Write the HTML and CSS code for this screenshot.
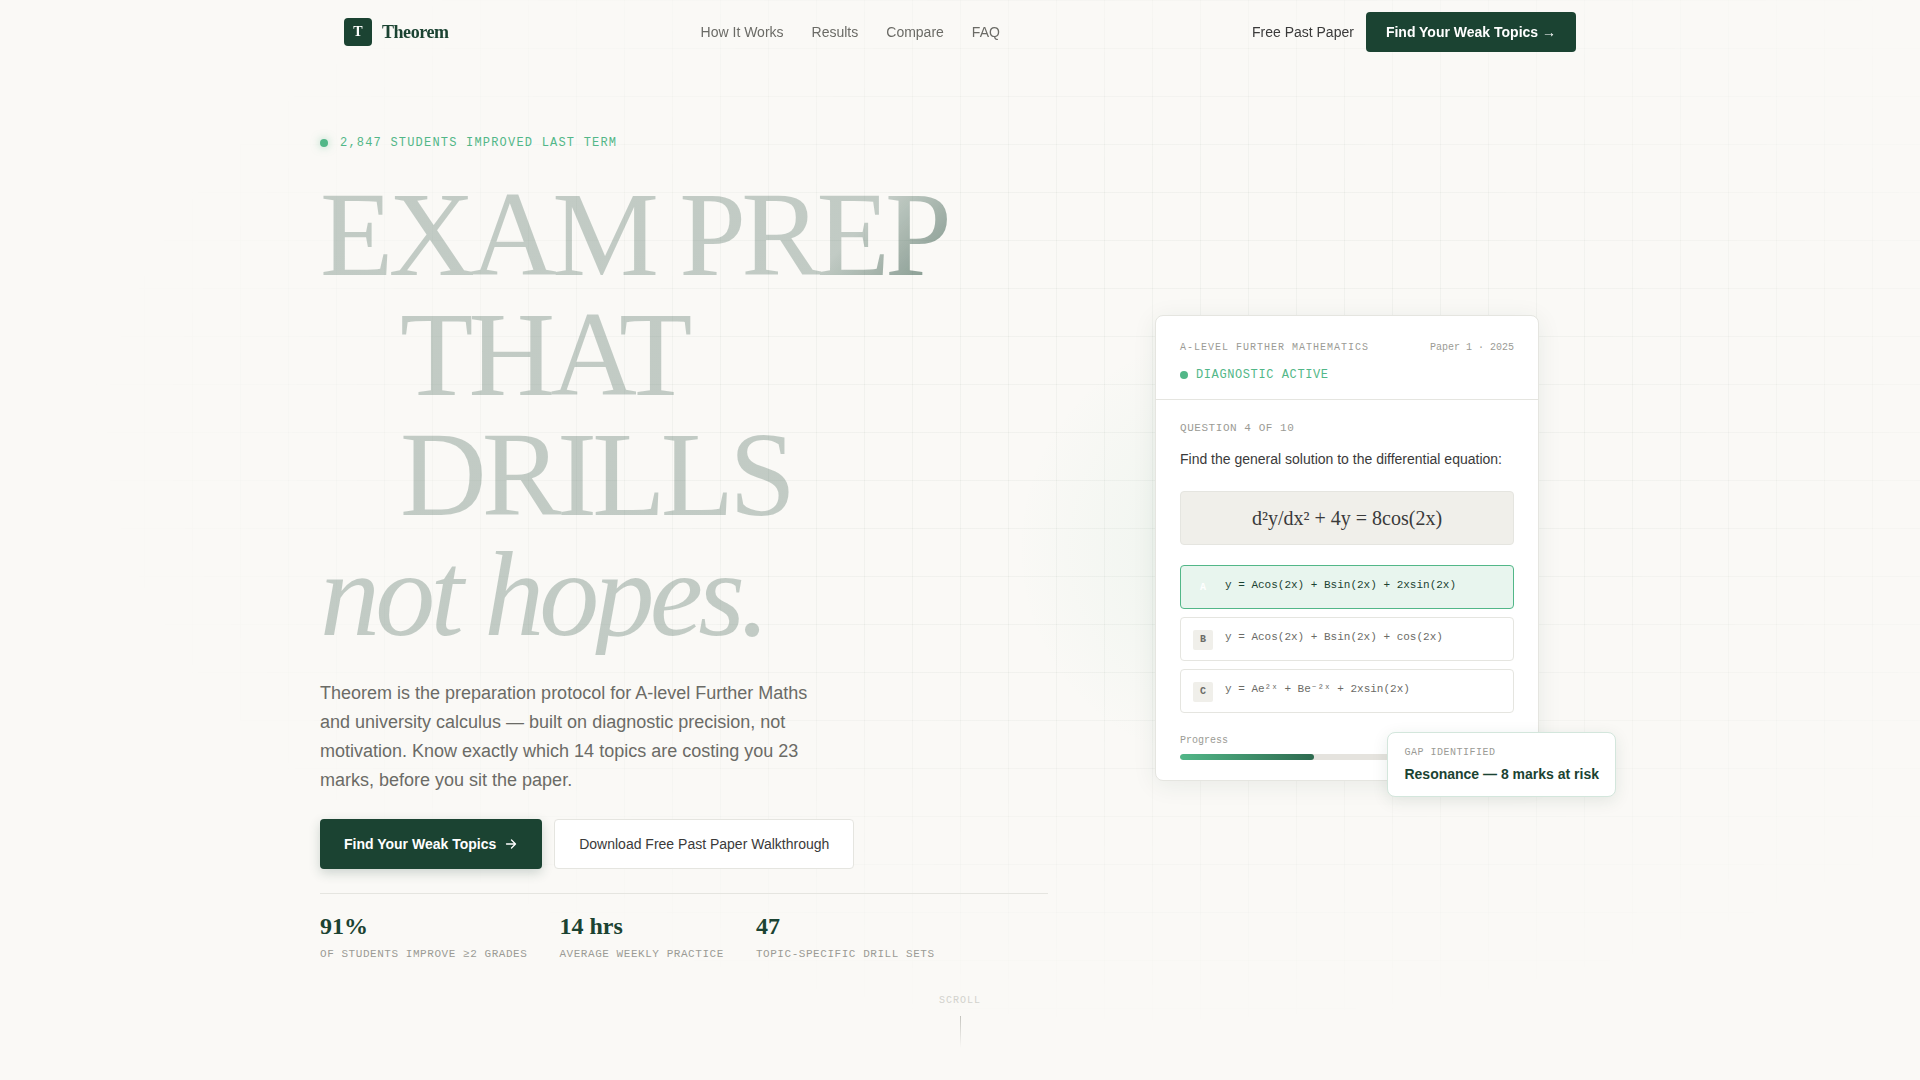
FILE: index.html
```html
<!DOCTYPE html>
<html lang="en">
<head>
    <meta charset="UTF-8">
    <meta name="viewport" content="width=device-width, initial-scale=1.0">
    <title>Theorem</title>
    <link rel="stylesheet" href="styles.css">
</head>
<body>
    <header class="site-header">
        <div class="header-inner">
            <a href="#" class="logo">
                <span class="logo-mark">T</span>
                <span class="logo-name">Theorem</span>
            </a>
            <nav class="main-nav">
                <a href="#how">How It Works</a>
                <a href="#results">Results</a>
                <a href="#compare">Compare</a>
                <a href="#faq">FAQ</a>
            </nav>
            <div class="header-actions">
                <a href="#paper" class="text-link">Free Past Paper</a>
                <a href="#start" class="btn-small">Find Your Weak Topics →</a>
            </div>
        </div>
    </header>

    <main class="hero">
        <div class="hero-grid-lines"></div>

        <div class="hero-inner">
            <!-- Left column -->
            <div class="hero-copy">
                <p class="eyebrow"><span class="dot dot-glow"></span>2,847 students improved last term</p>

                <h1 class="headline">
                    <span class="line line-first">EXAM PREP</span>
                    <span class="line line-indent">THAT DRILLS</span>
                    <em class="line">not hopes.</em>
                </h1>

                <p class="lead">Theorem is the preparation protocol for A-level Further Maths and university calculus — built on diagnostic precision, not motivation. Know exactly which 14 topics are costing you 23 marks, before you sit the paper.</p>

                <div class="cta-row">
                    <a href="#start" class="btn btn-primary">
                        Find Your Weak Topics
                        <svg width="14" height="14" viewBox="0 0 14 14" fill="none" stroke="currentColor" stroke-width="1.3" stroke-linecap="round" stroke-linejoin="round">
                            <path d="M2.5 7h9M7.5 3l4 4-4 4"/>
                        </svg>
                    </a>
                    <a href="#paper" class="btn btn-secondary">Download Free Past Paper Walkthrough</a>
                </div>

                <div class="stats">
                    <div class="stat">
                        <span class="stat-value">91%</span>
                        <span class="stat-label">of students improve ≥2 grades</span>
                    </div>
                    <div class="stat">
                        <span class="stat-value">14 hrs</span>
                        <span class="stat-label">average weekly practice</span>
                    </div>
                    <div class="stat">
                        <span class="stat-value">47</span>
                        <span class="stat-label">topic-specific drill sets</span>
                    </div>
                </div>
            </div>

            <!-- Right column -->
            <div class="hero-visual">
                <div class="glow"></div>
                <div class="card">
                    <div class="card-header">
                        <div class="card-meta">
                            <span class="card-subject">A-Level Further Mathematics</span>
                            <span>Paper 1 · 2025</span>
                        </div>
                        <div class="card-status"><span class="dot"></span>Diagnostic Active</div>
                    </div>
                    <div class="card-body">
                        <p class="question-count">Question 4 of 10</p>
                        <p class="question">Find the general solution to the differential equation:</p>
                        <div class="equation">d²y/dx² + 4y = 8cos(2x)</div>
                        <div class="options">
                            <button type="button" class="option selected">
                                <span class="option-key">A</span>
                                <span>y = Acos(2x) + Bsin(2x) + 2xsin(2x)</span>
                            </button>
                            <button type="button" class="option">
                                <span class="option-key">B</span>
                                <span>y = Acos(2x) + Bsin(2x) + cos(2x)</span>
                            </button>
                            <button type="button" class="option">
                                <span class="option-key">C</span>
                                <span>y = Ae²ˣ + Be⁻²ˣ + 2xsin(2x)</span>
                            </button>
                        </div>
                        <p class="progress-label">Progress</p>
                        <div class="progress-track">
                            <div class="progress-fill" style="width: 40%"></div>
                        </div>
                    </div>
                </div>
                <div class="gap-badge">
                    <p class="gap-label">Gap identified</p>
                    <p class="gap-text">Resonance — 8 marks at risk</p>
                </div>
            </div>
        </div>

        <div class="scroll-hint">
            <span>Scroll</span>
            <span class="scroll-line"></span>
        </div>
    </main>
</body>
</html>
```
FILE: styles.css
```css
:root {
    --bg: #faf9f6;
    --green: #1b4332;
    --green-mid: #2d6a4f;
    --green-light: #52b788;
    --ink: #3a3a3a;
    --grey: #6b6b66;
    --grey-light: #9b9b95;
    --line: #e5e5e0;
    --sans: "Liberation Sans", Arial, sans-serif;
    --serif: "Liberation Serif", "Times New Roman", serif;
    --mono: "Liberation Mono", "Courier New", monospace;
}
* {
    box-sizing: border-box;
    margin: 0;
    padding: 0;
}
body {
    background: var(--bg);
    color: var(--ink);
    font-family: var(--sans);
    font-size: 14px;
}
a {
    color: inherit;
    text-decoration: none;
}

/* Header */
.site-header {
    position: fixed;
    top: 0;
    left: 0;
    right: 0;
    z-index: 10;
}
.header-inner {
    max-width: 1280px;
    height: 64px;
    margin: 0 auto;
    padding: 0 24px;
    display: flex;
    align-items: center;
    justify-content: space-between;
}
.logo {
    display: flex;
    align-items: center;
    gap: 10px;
    color: var(--green);
    font-family: var(--serif);
    font-weight: bold;
}
.logo-mark {
    width: 28px;
    height: 28px;
    border-radius: 4px;
    background: var(--green);
    color: #fff;
    font-size: 14px;
    line-height: 28px;
    text-align: center;
}
.logo-name {
    font-size: 18px;
    letter-spacing: -0.025em;
}
.main-nav {
    display: flex;
    gap: 28px;
    color: var(--grey);
}
.header-actions {
    display: flex;
    align-items: center;
    gap: 12px;
}
.btn-small {
    padding: 0 20px;
    border-radius: 4px;
    background: var(--green);
    color: #fff;
    font-weight: bold;
    line-height: 40px;
}

/* Hero */
.hero {
    position: relative;
    min-height: 100vh;
    padding: 64px 24px 48px;
    display: flex;
    align-items: center;
    justify-content: center;
    overflow: hidden;
}
.hero-grid-lines {
    position: absolute;
    inset: 0;
    background-image:
        linear-gradient(rgba(27, 67, 50, 0.04) 1px, transparent 1px),
        linear-gradient(90deg, rgba(27, 67, 50, 0.04) 1px, transparent 1px);
    background-size: 48px 48px;
    mask-image: radial-gradient(ellipse 80% 80% at 60% 40%, black 30%, transparent 70%);
}
.hero-inner {
    position: relative;
    width: 100%;
    max-width: 1280px;
    display: grid;
    grid-template-columns: 7fr 5fr;
    gap: 32px;
    align-items: center;
}
.dot {
    width: 8px;
    height: 8px;
    border-radius: 50%;
    background: var(--green-light);
}
.dot-glow {
    box-shadow: 0 0 8px rgba(82, 183, 136, 0.5);
}
.eyebrow {
    display: flex;
    align-items: center;
    gap: 12px;
    margin-bottom: 24px;
    color: var(--green-light);
    font-family: var(--mono);
    font-size: 12px;
    line-height: 16px;
    letter-spacing: 0.1em;
    text-transform: uppercase;
}
.headline {
    margin-bottom: 24px;
    font-family: var(--serif);
    font-size: 120px;
    font-weight: normal;
    line-height: 120px;
    letter-spacing: -0.04em;
}
.line {
    display: block;
    background: linear-gradient(rgba(27, 67, 50, 0.25), rgba(27, 67, 50, 0.25));
    background-clip: text;
    color: transparent;
}
.line-first {
    background: linear-gradient(135deg, rgba(27, 67, 50, 0.25) 70%, rgba(27, 67, 50, 0.8) 100%);
    background-clip: text;
}
.line-indent {
    max-width: 560px;
    padding-left: 80px;
}
.lead {
    max-width: 512px;
    margin-bottom: 24px;
    color: var(--grey);
    font-size: 18px;
    line-height: 29px;
}
.cta-row {
    display: flex;
    gap: 12px;
    margin-bottom: 24px;
}
.btn {
    height: 50px;
    padding: 0 24px;
    display: flex;
    align-items: center;
    gap: 8px;
    border-radius: 4px;
}
.btn-primary {
    background: var(--green);
    color: #fff;
    font-weight: bold;
    box-shadow: 0 4px 12px rgba(27, 67, 50, 0.2);
}
.btn-secondary {
    background: #fff;
    border: 1px solid var(--line);
}
.stats {
    display: flex;
    gap: 32px;
    padding-top: 20px;
    border-top: 1px solid var(--line);
}
.stat-value,
.stat-label {
    display: block;
}
.stat-value {
    color: var(--green);
    font-family: var(--serif);
    font-size: 24px;
    font-weight: bold;
    line-height: 24px;
}
.stat-label {
    margin-top: 8px;
    color: var(--grey-light);
    font-family: var(--mono);
    font-size: 11px;
    line-height: 16px;
    letter-spacing: 0.05em;
    text-transform: uppercase;
}

/* Diagnostic card */
.hero-visual {
    position: relative;
    display: flex;
    justify-content: center;
    padding-left: 14px;
}
.glow {
    position: absolute;
    top: 50%;
    left: 30%;
    width: 440px;
    height: 440px;
    transform: translate(-50%, -50%);
    background: radial-gradient(circle closest-side, rgba(82, 183, 136, 0.08) 0%, transparent 100%);
}
.card {
    position: relative;
    width: 384px;
    background: #fff;
    border: 1px solid var(--line);
    border-radius: 8px;
    box-shadow: 0 4px 24px rgba(27, 67, 50, 0.08);
}
.card-header {
    padding: 24px 24px 16px;
    border-bottom: 1px solid var(--line);
}
.card-meta {
    display: flex;
    justify-content: space-between;
    margin-bottom: 12px;
    color: var(--grey-light);
    font-family: var(--mono);
    font-size: 10px;
    line-height: 15px;
}
.card-subject {
    letter-spacing: 0.1em;
    text-transform: uppercase;
}
.card-status {
    display: flex;
    align-items: center;
    gap: 8px;
    color: var(--green-light);
    font-family: var(--mono);
    font-size: 12px;
    line-height: 16px;
    letter-spacing: 0.05em;
    text-transform: uppercase;
}
.card-body {
    padding: 20px 24px;
}
.question-count {
    margin-bottom: 12px;
    color: var(--grey-light);
    font-family: var(--mono);
    font-size: 11px;
    line-height: 16px;
    letter-spacing: 0.05em;
    text-transform: uppercase;
}
.question {
    margin-bottom: 20px;
    line-height: 23px;
}
.equation {
    margin-bottom: 20px;
    padding: 12px;
    background: #f0efea;
    border: 1px solid var(--line);
    border-radius: 4px;
    font-family: var(--serif);
    font-size: 20px;
    line-height: 28px;
    text-align: center;
}
.options {
    display: flex;
    flex-direction: column;
    gap: 8px;
    margin-bottom: 20px;
}
.option {
    display: flex;
    align-items: flex-start;
    gap: 12px;
    padding: 12px 12px 10px;
    background: #fff;
    border: 1px solid var(--line);
    border-radius: 4px;
    color: var(--grey);
    font-family: var(--mono);
    font-size: 11px;
    line-height: 14px;
}
.option-key {
    width: 20px;
    height: 20px;
    border-radius: 2px;
    background: #f0efea;
    font-size: 10px;
    font-weight: bold;
    line-height: 20px;
}
.option.selected {
    background: #e8f5ee;
    border-color: var(--green-light);
    color: var(--green);
}
.selected .option-key {
    background: none;
    color: #fff;
}
.progress-label {
    margin-bottom: 6px;
    color: var(--grey-light);
    font-family: var(--mono);
    font-size: 10px;
    line-height: 15px;
}
.progress-track {
    height: 6px;
    border-radius: 3px;
    background: #e5e3de;
    overflow: hidden;
}
.progress-fill {
    height: 100%;
    border-radius: 3px;
    background: linear-gradient(90deg, var(--green-light), var(--green-mid));
}
.gap-badge {
    position: absolute;
    right: -16px;
    bottom: -16px;
    padding: 12px 16px;
    background: #fff;
    border: 1px solid #d3e6dc;
    border-radius: 8px;
    box-shadow: 0 4px 16px rgba(27, 67, 50, 0.1);
}
.gap-label {
    margin-bottom: 4px;
    color: var(--grey-light);
    font-family: var(--mono);
    font-size: 10px;
    line-height: 15px;
    letter-spacing: 0.05em;
    text-transform: uppercase;
}
.gap-text {
    color: var(--green);
    font-weight: bold;
    line-height: 20px;
}

/* Scroll hint */
.scroll-hint {
    position: absolute;
    bottom: 32px;
    left: 0;
    right: 0;
    display: flex;
    flex-direction: column;
    align-items: center;
    gap: 8px;
    color: #d2d2cd;
    font-family: var(--mono);
    font-size: 10px;
    line-height: 15px;
    letter-spacing: 0.1em;
    text-transform: uppercase;
}
.scroll-line {
    width: 1px;
    height: 32px;
    background: linear-gradient(#c4c4be, transparent);
}
```
